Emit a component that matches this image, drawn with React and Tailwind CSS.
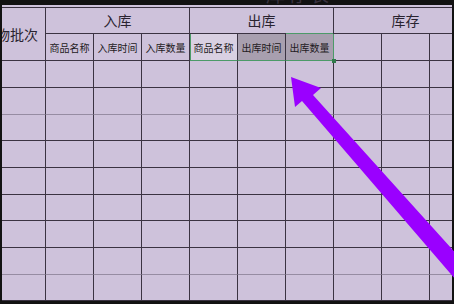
const font = { fontFamily: '"Noto Sans CJK SC", "Noto Sans", sans-serif' };

const bodyRows = [27, 27, 26, 27, 27, 26, 27, 27, 26];
const lightRows = [1, 7];

function Cell({ className = "", children }) {
  return (
    <div
      className={`border-r border-b border-[#3b3342] flex items-center justify-center overflow-hidden whitespace-nowrap ${className}`}
    >
      {children}
    </div>
  );
}

export default function App() {
  return (
    <div className="relative w-[454px] h-[304px] bg-[#121212] overflow-hidden" style={font}>
      {/* title, clipped by the bezel */}
      <div className="h-[5px] overflow-hidden">
        <div className="pl-[266px] -mt-[16px] text-[19px] leading-[20px] text-[#3a3340] tracking-[3px]">
          库存表
        </div>
      </div>

      <div className="ml-[2px] w-[450px] h-[296px] bg-[#cec2db] overflow-hidden pt-[2px]">
        <div className="-ml-[36px] w-max border-t border-[#3b3342]">
          {/* header */}
          <div className="grid grid-cols-[80px_repeat(9,48px)] grid-rows-[26px_27px]">
            <Cell className="row-span-2 justify-end pr-[7px] text-[14px] text-[#2a2430]">
              货物批次
            </Cell>
            <Cell className="col-span-3 text-[14px] text-[#2a2430]">入库</Cell>
            <Cell className="col-span-3 text-[14px] text-[#2a2430]">出库</Cell>
            <Cell className="col-span-3 text-[14px] text-[#2a2430]">库存</Cell>
            <Cell className="text-[10px] text-[#1e1a22]">商品名称</Cell>
            <Cell className="text-[10px] text-[#1e1a22]">入库时间</Cell>
            <Cell className="text-[10px] text-[#1e1a22]">入库数量</Cell>
            <Cell className="relative text-[10px] text-[#1e1a22] bg-[#d9d0e2] border-b-[#4c9a68]">
              <span className="absolute inset-y-0 left-0 w-[1px] bg-[#4c9a68]" />
              <span className="absolute inset-x-0 top-[-1px] h-[1px] bg-[#4c9a68]" />
              商品名称
            </Cell>
            <Cell className="relative text-[10px] text-[#1e1a22] bg-[#a89faf] border-b-[#4c9a68]">
              <span className="absolute inset-x-0 top-[-1px] h-[1px] bg-[#4c9a68]" />
              出库时间
            </Cell>
            <Cell className="relative text-[10px] text-[#1e1a22] bg-[#a89faf] border-b-[#4c9a68] border-r-[#4c9a68] overflow-visible">
              <span className="absolute inset-x-0 top-[-1px] h-[1px] bg-[#4c9a68]" />
              <span className="absolute right-[-3px] bottom-[-3px] w-[4px] h-[4px] bg-[#2f7a4a] z-10" />
              出库数量
            </Cell>
            <Cell />
            <Cell />
            <Cell />
          </div>

          {/* body */}
          {bodyRows.map((h, r) => (
            <div
              key={r}
              className="grid grid-cols-[80px_repeat(9,48px)]"
              style={{ height: h }}
            >
              {Array.from({ length: 10 }).map((_, c) => (
                <Cell
                  key={c}
                  className={lightRows.includes(r) ? "border-b-[#968ca2]" : ""}
                />
              ))}
            </div>
          ))}
        </div>
      </div>

      {/* purple arrow drawn over the sheet */}
      <svg className="absolute inset-0" width="454" height="304" viewBox="0 0 454 304">
        <polygon
          points="291,77 321,88 313,95 462,260 462,287 302,101 295,107"
          fill="#9a00ff"
        />
      </svg>
    </div>
  );
}
